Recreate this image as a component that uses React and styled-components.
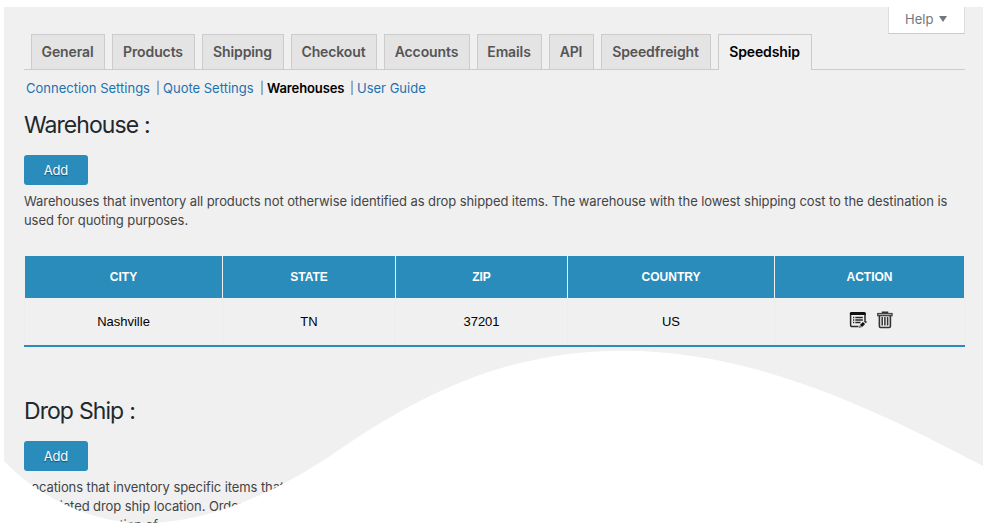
import React from "react";
import styled, { createGlobalStyle } from "styled-components";

const GlobalStyle = createGlobalStyle`
  * { box-sizing: border-box; }
  html, body { margin: 0; background: #fff; overflow: hidden; }
`;

const Page = styled.div`
  width: 988px;
  height: 531px;
  padding: 7px 5px 0 4px;
  background: #fff;
  font-family: Inter, "Liberation Sans", sans-serif;
  font-size: 13px;
  color: #444;
`;

const Panel = styled.main`
  height: 517px;
  padding: 0 18px 0 20px;
  background: #f0f0f0;
  clip-path: path("M0 0H979V459C851 391 739 343.7 619 343.7C501 344 416 387 326 449C279 480 211 516 139 516C83 516 30 486 0 454Z");
`;

const TopBar = styled.div`
  display: flex;
  justify-content: flex-end;
  height: 27px;
`;

const HelpButton = styled.button`
  display: flex;
  align-items: center;
  gap: 6px;
  width: 77px;
  height: 27px;
  padding: 0 0 2px 16px;
  border: 1px solid #ddd;
  border-top: 0;
  border-bottom-color: #ccc;
  background: #fff;
  color: #72777c;
  font: 13px/18px Inter, sans-serif;
`;

const Caret = styled.i`
  margin-top: -1px;
  border: 4px solid transparent;
  border-top: 6px solid #72777c;
  border-bottom: 0;
`;

const Tabs = styled.nav`
  display: flex;
  gap: 7px;
  height: 36px;
  padding-left: 7px;
  border-bottom: 1px solid #ccc;
`;

const Tab = styled.a`
  width: ${(p) => p.$width}px;
  height: ${(p) => (p.$active ? 36 : 35)}px;
  border: 1px solid #ccc;
  border-bottom: 0;
  background: ${(p) => (p.$active ? "#f0f0f0" : "#e4e4e4")};
  color: ${(p) => (p.$active ? "#000" : "#555")};
  font-size: 14px;
  font-weight: 600;
  line-height: 34px;
  letter-spacing: -0.12px;
  text-align: center;
  text-indent: -1px;
  white-space: nowrap;
`;

const SubNav = styled.div`
  display: flex;
  height: 37px;
  padding-left: 2px;
  line-height: 36px;
  letter-spacing: -0.03px;
  white-space: nowrap;
`;

const SubLink = styled.a`
  width: ${(p) => p.$width}px;
  color: ${(p) => (p.$active ? "#000" : "#1b72b0")};
  font-weight: ${(p) => (p.$active ? 600 : 400)};
  letter-spacing: ${(p) => (p.$active ? -0.1 : 0)}px;
`;

const Divider = styled.span`
  width: 7px;
  color: #666;
  font-size: 12px;
`;

const Title = styled.h2`
  margin: 0;
  height: ${(p) => p.$height}px;
  padding-top: 2px;
  color: #23282d;
  font-size: 23px;
  font-weight: 400;
  line-height: 32px;
  letter-spacing: -0.95px;
  word-spacing: 0.5px;
`;

const AddButton = styled.button`
  display: block;
  width: 64px;
  height: 30px;
  padding: 0;
  border: 0;
  border-radius: 3px;
  background: #298cba;
  color: #fff;
  font: 13px/30px Inter, sans-serif;
  letter-spacing: -0.2px;
  text-shadow: 0 1px 1px rgba(0, 0, 0, 0.45);
`;

const Description = styled.p`
  margin: 7px 0 0;
  line-height: 19px;
  letter-spacing: -0.083px;
  white-space: nowrap;
`;

const Line = styled.span`
  display: block;
`;

const Table = styled.div`
  height: 92px;
  margin: 25px 0 46px;
  border-bottom: 2px solid #298cba;
  font-family: "Liberation Sans", Arial, sans-serif;
`;

const Row = styled.div`
  display: grid;
  grid-template-columns: 198px 173px 172px 207px 191px;
`;

const HeadCell = styled.div`
  height: 43px;
  border: 1px solid #f0f0f0;
  border-width: 1px 0 0 1px;
  background: #298cba;
  color: #fff;
  font-size: 12px;
  font-weight: 700;
  line-height: 42px;
  text-align: center;

  &:last-child { border-right-width: 1px; }
`;

const Cell = styled.div`
  display: flex;
  align-items: center;
  justify-content: center;
  gap: 9px;
  height: 47px;
  border-left: 1px solid #ececec;
  color: #000;
  font-size: 13px;

  &:last-child {
    padding-left: 4px;
    border-right: 1px solid #ececec;
  }
`;

const Icon = styled.svg`
  display: block;
  width: 18px;
  height: 18px;
  margin-top: -4px;
`;

const EditIcon = () => (
  <Icon viewBox="0 0 18 18" fill="none">
    <path d="M9.5 15.5H3Q1.6 15.5 1.6 14.2V2.5H16V9.5" stroke="#2a2a2a" strokeWidth="1.5" />
    <path d="M0.9 4V2.4Q0.9 1 2.5 1H15Q16.7 1 16.7 2.4V4Z" fill="#111" />
    <path d="M4 6.5H5.3M6.3 6.5H13.8M4 9H5.3M6.3 9H13.8M4 11.5H5.3M6.3 11.5H11.5" stroke="#2a2a2a" strokeWidth="1.4" />
    <path d="M9.8 17L10.6 14.2L12.6 16.2Z" fill="#666" />
    <path d="M12 15L15 12" stroke="#111" strokeWidth="3" />
    <path d="M15.7 11.3L17 10" stroke="#333" strokeWidth="2.8" />
  </Icon>
);

const TrashIcon = () => (
  <Icon viewBox="0 0 18 18" fill="none" stroke="#333">
    <path d="M6.5 2.5V1.2H11.5V2.5" strokeWidth="1.5" />
    <rect x="1.8" y="2.6" width="14.2" height="2" stroke="#444" strokeWidth="1.4" />
    <path d="M3.4 5V15.3Q3.4 16.5 4.6 16.5H13.2Q14.4 16.5 14.4 15.3V5" strokeWidth="1.6" />
    <path d="M6.2 6V14.5M8.9 6V14.5M11.6 6V14.5" strokeWidth="1.5" />
  </Icon>
);

const tabs = [
  ["General", 74], ["Products", 83], ["Shipping", 82], ["Checkout", 86],
  ["Accounts", 86], ["Emails", 65], ["API", 45], ["Speedfreight", 110], ["Speedship", 94],
];
const columns = ["CITY", "STATE", "ZIP", "COUNTRY", "ACTION"];
const warehouse = ["Nashville", "TN", "37201", "US"];

export default function App() {
  return (
    <>
      <GlobalStyle />
      <Page>
        <Panel>
          <TopBar>
            <HelpButton>Help <Caret /></HelpButton>
          </TopBar>
          <Tabs>
            {tabs.map(([name, width]) => (
              <Tab key={name} $width={width} $active={name === "Speedship"}>{name}</Tab>
            ))}
          </Tabs>
          <SubNav>
            <SubLink $width={130}>Connection Settings</SubLink>
            <Divider>|</Divider>
            <SubLink $width={97}>Quote Settings</SubLink>
            <Divider>|</Divider>
            <SubLink $width={83} $active>Warehouses</SubLink>
            <Divider>|</Divider>
            <SubLink $width={70}>User Guide</SubLink>
          </SubNav>
          <Title $height={48}>Warehouse :</Title>
          <AddButton>Add</AddButton>
          <Description>
            <Line>Warehouses that inventory all products not otherwise identified as drop shipped items. The warehouse with the lowest shipping cost to the destination is</Line>
            <Line>used for quoting purposes.</Line>
          </Description>
          <Table>
            <Row>
              {columns.map((name) => <HeadCell key={name}>{name}</HeadCell>)}
            </Row>
            <Row>
              {warehouse.map((value) => <Cell key={value}>{value}</Cell>)}
              <Cell><EditIcon /><TrashIcon /></Cell>
            </Row>
          </Table>
          <Title $height={48}>Drop Ship :</Title>
          <AddButton>Add</AddButton>
          <Description>
            <Line>Locations that inventory specific items that are drop shipped</Line>
            <Line>associated drop ship location. Orders for</Line>
            <Line>for the combination of a</Line>
          </Description>
        </Panel>
      </Page>
    </>
  );
}
